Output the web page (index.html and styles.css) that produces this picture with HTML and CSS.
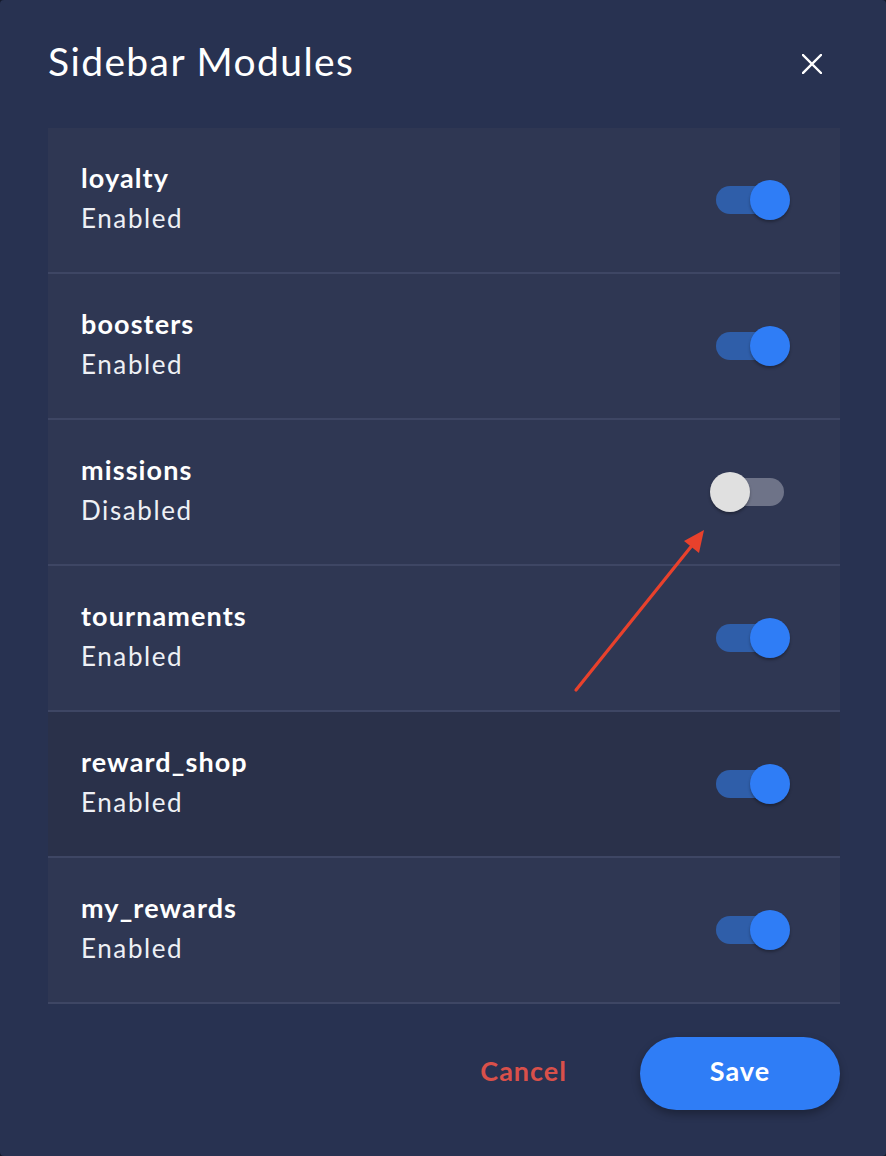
FILE: index.html
```html
<!DOCTYPE html>
<html lang="en">
<head>
<meta charset="utf-8">
<title>Sidebar Modules</title>
<link rel="stylesheet" href="styles.css">
</head>
<body>
<div class="dialog">
  <header class="dialog-header">
    <h1 class="dialog-title">Sidebar Modules</h1>
    <button class="close-btn" aria-label="Close">
      <svg width="20" height="20" viewBox="0 0 20 20"><path d="M1 1 L19 19 M19 1 L1 19" stroke="#ffffff" stroke-width="2.4" stroke-linecap="square" fill="none"/></svg>
    </button>
  </header>

  <ul class="module-list">
    <li class="module-row">
      <div class="module-text"><div class="module-name">loyalty</div><div class="module-status">Enabled</div></div>
      <span class="switch on"><span class="track"></span><span class="thumb"></span></span>
    </li>
    <li class="module-row">
      <div class="module-text"><div class="module-name">boosters</div><div class="module-status">Enabled</div></div>
      <span class="switch on"><span class="track"></span><span class="thumb"></span></span>
    </li>
    <li class="module-row">
      <div class="module-text"><div class="module-name">missions</div><div class="module-status">Disabled</div></div>
      <span class="switch off"><span class="track"></span><span class="thumb"></span></span>
    </li>
    <li class="module-row">
      <div class="module-text"><div class="module-name">tournaments</div><div class="module-status">Enabled</div></div>
      <span class="switch on"><span class="track"></span><span class="thumb"></span></span>
    </li>
    <li class="module-row hover">
      <div class="module-text"><div class="module-name">reward_shop</div><div class="module-status">Enabled</div></div>
      <span class="switch on"><span class="track"></span><span class="thumb"></span></span>
    </li>
    <li class="module-row">
      <div class="module-text"><div class="module-name">my_rewards</div><div class="module-status">Enabled</div></div>
      <span class="switch on"><span class="track"></span><span class="thumb"></span></span>
    </li>
  </ul>

  <footer class="dialog-footer">
    <button class="btn-cancel">Cancel</button>
    <button class="btn-save">Save</button>
  </footer>

  <svg class="annotation" width="886" height="1156" viewBox="0 0 886 1156">
    <line x1="576" y1="690" x2="694" y2="543" stroke="#e8412c" stroke-width="3.2" stroke-linecap="round"/>
    <polygon points="704,530 699,553 684,541" fill="#e8412c"/>
  </svg>
</div>
</body>
</html>
```

FILE: styles.css
```css
* { box-sizing: border-box; }

html, body {
  margin: 0;
  padding: 0;
  background: #141a2b;
}

body {
  font-family: Lato, "Open Sans", "Liberation Sans", sans-serif;
  color: #ffffff;
}

.dialog {
  position: relative;
  width: 886px;
  height: 1156px;
  background: #283251;
  border-radius: 4px;
  padding: 37px 46px 46px 48px;
  display: flex;
  flex-direction: column;
}

.dialog-header {
  display: flex;
  justify-content: space-between;
  align-items: flex-start;
  height: 91px;
}

.dialog-title {
  margin: 0;
  font-size: 39px;
  line-height: 48px;
  font-weight: 400;
  letter-spacing: 1.4px;
  color: #ffffff;
}

.close-btn {
  width: 40px;
  height: 40px;
  margin-top: 7px;
  margin-right: 8px;
  background: none;
  border: 0;
  padding: 0;
  display: flex;
  align-items: center;
  justify-content: center;
  cursor: pointer;
}

.module-list {
  list-style: none;
  margin: 0;
  padding: 0;
}

.module-row {
  height: 146px;
  background: #2f3753;
  border-bottom: 2px solid #3e4664;
  display: flex;
  align-items: center;
  justify-content: space-between;
  padding: 0 50px 0 33px;
}

.module-row.hover {
  background: #2a314a;
}

.module-text {
  padding-bottom: 5px;
}

.module-name {
  font-size: 27px;
  line-height: 40px;
  font-weight: 700;
  letter-spacing: 1.1px;
  color: #ffffff;
}

.module-status {
  font-size: 26px;
  line-height: 40px;
  font-weight: 400;
  letter-spacing: 1.6px;
  color: #eef0f5;
}

.switch {
  position: relative;
  width: 80px;
  height: 40px;
  flex: none;
}

.switch .track {
  position: absolute;
  left: 6px;
  top: 6px;
  width: 68px;
  height: 28px;
  border-radius: 14px;
}

.switch .thumb {
  position: absolute;
  top: 0;
  width: 40px;
  height: 40px;
  border-radius: 50%;
  box-shadow: 0 2px 3px rgba(0, 0, 0, 0.3);
}

.switch.on .track { background: #2f5ea9; }
.switch.on .thumb { left: 40px; background: #2f7df6; }

.switch.off .track { background: #6e7388; }
.switch.off .thumb { left: 0; background: #e0e0e0; }

.dialog-footer {
  margin-top: 33px;
  display: flex;
  justify-content: flex-end;
  align-items: center;
}

.btn-cancel {
  background: none;
  border: 0;
  padding: 0 0 7px;
  margin-right: 73px;
  font-family: inherit;
  font-size: 27px;
  font-weight: 700;
  letter-spacing: 1px;
  color: #d9504a;
  cursor: pointer;
}

.btn-save {
  width: 200px;
  height: 73px;
  border: 0;
  border-radius: 37px;
  padding: 0 0 7px;
  background: #2f7df6;
  color: #ffffff;
  font-family: inherit;
  font-size: 27px;
  font-weight: 700;
  letter-spacing: 1px;
  box-shadow: 0 4px 8px rgba(0, 0, 0, 0.3);
  cursor: pointer;
}

.annotation {
  position: absolute;
  left: 0;
  top: 0;
  pointer-events: none;
}
```
